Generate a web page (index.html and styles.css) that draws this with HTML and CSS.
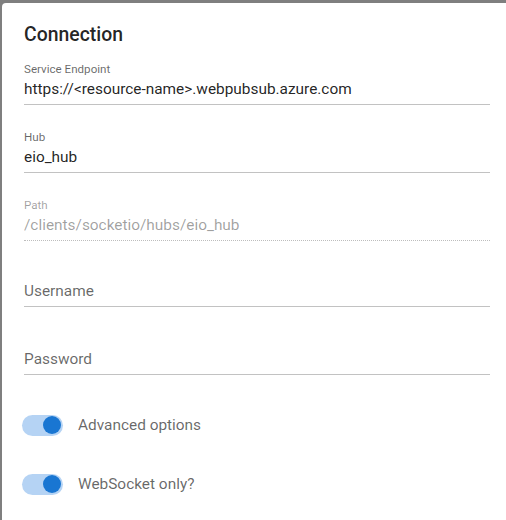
FILE: index.html
```html
<!DOCTYPE html>
<html>
<head>
<meta charset="utf-8">
<link rel="stylesheet" href="styles.css">
</head>
<body>
<div class="dialog">
  <h2 class="title">Connection</h2>
  <div class="fields">
    <div class="field">
      <div class="label">Service Endpoint</div>
      <div class="value">https://&lt;resource-name&gt;.webpubsub.azure.com</div>
    </div>
    <div class="field">
      <div class="label">Hub</div>
      <div class="value">eio_hub</div>
    </div>
    <div class="field disabled">
      <div class="label">Path</div>
      <div class="value">/clients/socketio/hubs/eio_hub</div>
    </div>
    <div class="field empty first-empty">
      <div class="label"></div>
      <div class="value">Username</div>
    </div>
    <div class="field empty">
      <div class="label"></div>
      <div class="value">Password</div>
    </div>
  </div>
  <div class="switches">
    <div class="switch-row">
      <span class="switch"><span class="thumb"></span></span>
      <span class="switch-label">Advanced options</span>
    </div>
    <div class="switch-row">
      <span class="switch"><span class="thumb"></span></span>
      <span class="switch-label">WebSocket only?</span>
    </div>
  </div>
</div>
</body>
</html>
```
FILE: styles.css
```css
html, body {
  margin: 0;
  padding: 0;
  background: #7f7f7f;
  height: 520px;
  overflow: hidden;
}
body {
  padding-top: 3px;
  padding-left: 2px;
  box-sizing: border-box;
  font-family: Roboto, "Liberation Sans", sans-serif;
}
.dialog {
  background: #ffffff;
  border-top-left-radius: 4px;
  height: 517px;
  box-sizing: border-box;
  padding: 16px 16px 0 22px;
}
.title {
  margin: 0;
  font-size: 19.4px;
  font-weight: 500;
  line-height: 32px;
  color: rgba(0, 0, 0, 0.87);
}
.fields {
  margin-top: 10px;
  display: flex;
  flex-direction: column;
  gap: 24px;
}
.field {
  border-bottom: 1px solid #c2c2c2;
  padding-bottom: 3px;
}
.field.first-empty {
  margin-top: -2px;
}
.label {
  font-size: 11.6px;
  line-height: 16px;
  height: 16px;
  color: rgba(0, 0, 0, 0.6);
}
.value {
  font-size: 15.4px;
  line-height: 24px;
  color: rgba(0, 0, 0, 0.87);
}
.field.disabled {
  border-bottom: 1px dotted #bdbdbd;
}
.field.disabled .label,
.field.disabled .value {
  color: rgba(0, 0, 0, 0.38);
}
.field.empty .value {
  color: rgba(0, 0, 0, 0.6);
}
.switches {
  margin-top: 31px;
  display: flex;
  flex-direction: column;
  gap: 21px;
}
.switch-row {
  display: flex;
  align-items: center;
  height: 38px;
}
.switch {
  position: relative;
  display: inline-block;
  width: 41px;
  height: 21px;
  border-radius: 11px;
  background: #b5d3f4;
  margin-left: -2px;
  flex-shrink: 0;
}
.thumb {
  position: absolute;
  right: 2px;
  top: 1.5px;
  width: 18px;
  height: 18px;
  border-radius: 50%;
  background: #1976d2;
}
.switch-label {
  margin-left: 15px;
  font-size: 15.4px;
  color: rgba(0, 0, 0, 0.6);
}
```
